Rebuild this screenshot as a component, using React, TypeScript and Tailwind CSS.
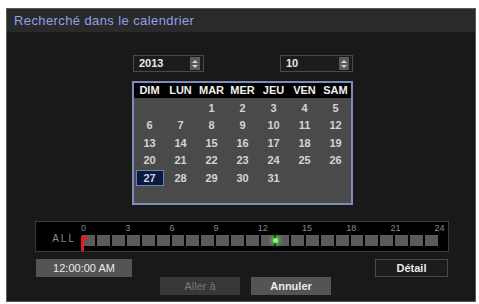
import React from 'react';

const days = ['DIM', 'LUN', 'MAR', 'MER', 'JEU', 'VEN', 'SAM'];
// octobre 2013 : le 1er tombe un mardi
const cells: (number | null)[] = [null, null, ...Array.from({ length: 31 }, (_, i) => i + 1)];
while (cells.length < 35) cells.push(null);

const hours = ['0', '3', '6', '9', '12', '15', '18', '21', '24'];

function Spinner() {
  return (
    <div className="flex h-[13px] w-[10px] flex-col items-center justify-center gap-[2px] bg-[#5a5a5a]">
      <svg width="6" height="3" viewBox="0 0 6 3"><path d="M0 3 L3 0 L6 3 Z" fill="#d0d0d0" /></svg>
      <svg width="6" height="3" viewBox="0 0 6 3"><path d="M0 0 L3 3 L6 0 Z" fill="#d0d0d0" /></svg>
    </div>
  );
}

function Select({ value, width }: { value: string; width: string }) {
  return (
    <div className={`flex h-[17px] ${width} items-center justify-between border border-[#4a4a4a] bg-[#1c1c1c] pl-[5px] pr-[3px]`}>
      <span className="text-[11px] font-bold text-[#e8e8e8]">{value}</span>
      <Spinner />
    </div>
  );
}

export default function App() {
  return (
    <div className="h-[304px] w-[479px] bg-white pl-[6px] pt-[8px]" style={{ fontFamily: '"Liberation Sans", Arial, sans-serif' }}>
      <div className="flex h-[294px] w-[470px] flex-col border border-[#5a5a5a] bg-[#191919]">
        <div className="flex h-[23px] items-center bg-[#2a2a2a] px-[7px] text-[13px] tracking-[0.4px] text-[#8ea2e8]">
          Recherché dans le calendrier
        </div>

        <div className="ml-[126px] mt-[23px] flex w-[220px] justify-between">
          <Select value="2013" width="w-[71px]" />
          <Select value="10" width="w-[73px]" />
        </div>

        <div className="ml-[125px] mt-[9px] h-[124px] w-[221px] border-2 border-[#7d8cba] bg-[#4a4a4a]">
          <div className="grid h-[15px] grid-cols-7 bg-black text-[11px] font-bold leading-[15px] text-[#f0f0f0]">
            {days.map((d) => (
              <div key={d} className="text-center">{d}</div>
            ))}
          </div>
          <div className="grid grid-cols-7 pt-[1px]">
            {cells.map((c, i) => (
              <div key={i} className="flex h-[17.5px] items-center justify-center">
                {c !== null &&
                  (c === 27 ? (
                    <div className="flex h-[16px] w-[28px] items-center justify-center border border-[#6d80b4] bg-[#0d1a3c] text-[11px] font-bold text-[#c8d2f0]">
                      {c}
                    </div>
                  ) : (
                    <span className="text-[11px] font-bold text-[#d4d4d4]">{c}</span>
                  ))}
              </div>
            ))}
          </div>
        </div>

        <div className="ml-[28px] mt-[16px] flex h-[31px] w-[414px] border border-[#3c3c3c] bg-black">
          <div className="flex w-[46px] items-end justify-end pb-[5px] pr-[6px] text-[10px] tracking-[2px] text-[#8a8a8a]">
            ALL
          </div>
          <div className="flex w-[356px] flex-col">
            <div className="relative h-[12px] text-[9px] leading-[12px] text-[#8a8a8a]">
              {hours.map((h, i) => (
                <span key={h} className="absolute top-0" style={{ left: i * 44.2 - 1 }}>{h}</span>
              ))}
            </div>
            <div className="relative mt-[1px] grid h-[11px] grid-cols-24 gap-[2px]">
              {Array.from({ length: 24 }, (_, i) => (
                <div key={i} className="bg-[#5a5a5a]" />
              ))}
              <div className="absolute left-[-1px] top-[1px] h-[15px] w-[3px] bg-[#e02020]" />
              <div className="absolute left-[2px] top-[1px] h-[4px] w-[3px] bg-[#e02020]" />
              <div className="absolute left-[191px] top-[3px] h-[5px] w-[5px] rounded-full bg-[#7cff6a] shadow-[0_0_4px_2px_rgba(100,255,80,0.6)]" />
            </div>
          </div>
        </div>

        <div className="mt-[7px] flex justify-between pl-[29px] pr-[27px]">
          <div className="flex h-[18px] w-[96px] items-center justify-center bg-[#545454] text-[11px] text-[#eaeaea]">
            12:00:00 AM
          </div>
          <div className="flex h-[18px] w-[73px] items-center justify-center border border-[#4a4a4a] bg-[#1c1c1c] text-[11px] font-bold text-[#eaeaea]">
            Détail
          </div>
        </div>

        <div className="flex pl-[153px]">
          <div className="flex h-[18px] w-[80px] items-center justify-center bg-[#383838] text-[11px] text-[#777]">
            Aller à
          </div>
          <div className="ml-[11px] flex h-[18px] w-[80px] items-center justify-center bg-[#545454] text-[11px] font-bold text-[#eaeaea]">
            Annuler
          </div>
        </div>
      </div>
    </div>
  );
}
